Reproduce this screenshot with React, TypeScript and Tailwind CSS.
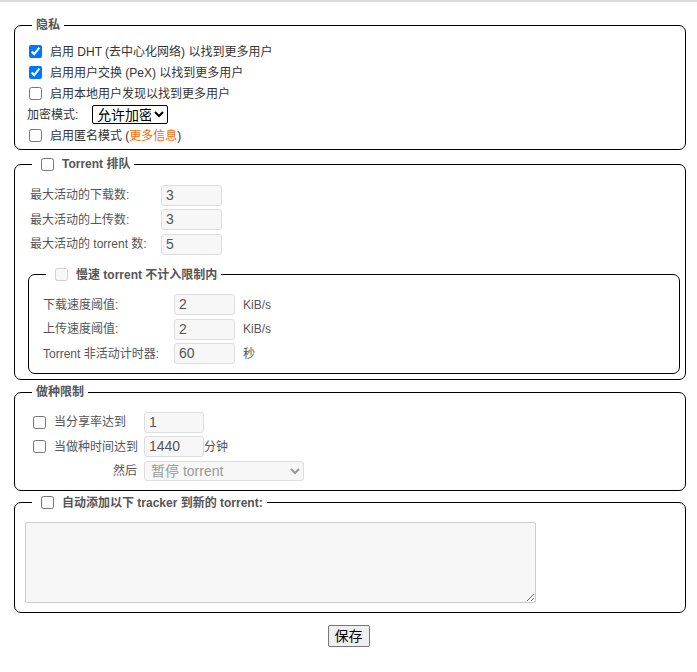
import type { ReactNode } from "react"

function Box({
  legend,
  className = "",
  children,
}: {
  legend: ReactNode
  className?: string
  children: ReactNode
}) {
  return (
    <fieldset className={`border border-black rounded-[7px] ${className}`}>
      <legend className="ml-[17px] px-1 h-[16px] flex items-center gap-2 text-[12px] font-bold text-[#555]">
        {legend}
      </legend>
      {children}
    </fieldset>
  )
}

function NumInput({ value, width = "w-[61px]" }: { value: string; width?: string }) {
  return (
    <input
      type="text"
      defaultValue={value}
      className={`${width} h-[21px] px-[4px] text-[14px] text-[#555] bg-[#f7f7f7] border border-[#ddd] rounded-[3px]`}
    />
  )
}

function Row({ label, value, unit, labelW }: { label: string; value: string; unit?: string; labelW: string }) {
  return (
    <div className="flex items-center h-[24.5px]">
      <span className={labelW}>{label}</span>
      <NumInput value={value} />
      {unit && <span className="ml-2">{unit}</span>}
    </div>
  )
}

export default function App() {
  return (
    <div className="min-h-screen bg-white font-['Liberation_Sans','Noto_Sans_CJK_SC',sans-serif] text-[12px]">
      <div className="h-[2px] bg-[#ddd]" />

      <Box legend="隐私" className="mt-[15px] ml-[14px] mr-[11px]">
        <div className="pl-[14px] pt-[8px] pb-[3px] text-[#333]">
          <label className="flex items-center gap-2 h-[21px]">
            <input type="checkbox" defaultChecked />
            启用 DHT (去中心化网络) 以找到更多用户
          </label>
          <label className="flex items-center gap-2 h-[21px]">
            <input type="checkbox" defaultChecked />
            启用用户交换 (PeX) 以找到更多用户
          </label>
          <label className="flex items-center gap-2 h-[21px]">
            <input type="checkbox" />
            启用本地用户发现以找到更多用户
          </label>
          <div className="flex items-center h-[21px] -ml-[2px]">
            <span className="w-[65px]">加密模式:</span>
            <select className="h-[19px] w-[76px] text-[14px] text-black bg-white border border-black rounded-[2px]">
              <option>允许加密</option>
              <option>强制加密</option>
              <option>禁用加密</option>
            </select>
          </div>
          <label className="flex items-center gap-2 h-[21px]">
            <input type="checkbox" />
            <span>
              启用匿名模式 (<span className="text-[#f60]">更多信息</span>)
            </span>
          </label>
        </div>
      </Box>

      <Box
        legend={
          <>
            <input type="checkbox" className="ml-[5px]" />
            <span>Torrent 排队</span>
          </>
        }
        className="mt-[6px] ml-[14px] mr-[11px]"
      >
        <div className="pt-[11px] pb-[5px] text-[#555]">
          <div className="pl-[15px]">
            <Row label="最大活动的下载数:" value="3" labelW="w-[131px]" />
            <Row label="最大活动的上传数:" value="3" labelW="w-[131px]" />
            <Row label="最大活动的 torrent 数:" value="5" labelW="w-[131px]" />
          </div>
          <Box
            legend={
              <>
                <input type="checkbox" disabled className="ml-[5px]" />
                <span>慢速 torrent 不计入限制内</span>
              </>
            }
            className="mt-[10px] ml-[13px] mr-[5px]"
          >
            <div className="pl-[14px] pt-[10px] pb-[7px]">
              <Row label="下载速度阈值:" value="2" unit="KiB/s" labelW="w-[131px]" />
              <Row label="上传速度阈值:" value="2" unit="KiB/s" labelW="w-[131px]" />
              <Row label="Torrent 非活动计时器:" value="60" unit="秒" labelW="w-[131px]" />
            </div>
          </Box>
        </div>
      </Box>

      <Box legend="做种限制" className="mt-[4px] ml-[14px] mr-[11px]">
        <div className="pl-[18px] pt-[10px] pb-[6px] text-[#555] grid grid-cols-[111px_auto] auto-rows-[24.5px] items-center justify-start">
          <label className="flex items-center gap-[8px]">
            <input type="checkbox" />
            当分享率达到
          </label>
          <NumInput value="1" width="w-[60px]" />
          <label className="flex items-center gap-[8px]">
            <input type="checkbox" />
            当做种时间达到
          </label>
          <div className="flex items-center">
            <NumInput value="1440" width="w-[60px]" />
            <span>分钟</span>
          </div>
          <span className="text-right pr-[7px]">然后</span>
          <select
            disabled
            className="w-[160px] h-[20px] text-[14px] text-[#999] bg-[#f7f7f7] border border-[#ddd] rounded-[3px] pl-[2px]"
          >
            <option>暂停 torrent</option>
            <option>删除 torrent</option>
          </select>
        </div>
      </Box>

      <Box
        legend={
          <>
            <input type="checkbox" className="ml-[5px]" />
            <span>自动添加以下 tracker 到新的 torrent:</span>
          </>
        }
        className="mt-[4px] ml-[14px] mr-[11px]"
      >
        <div className="pl-[10px] pt-[11px] pb-[9px]">
          <textarea className="block w-[511px] h-[81px] bg-[#f7f7f7] border border-[#ccc] rounded-[2px]" />
        </div>
      </Box>

      <div className="flex justify-center mt-[12px]">
        <button className="h-[22px] px-[6px] text-[14px] text-black bg-[#efefef] border border-[#767676] rounded-[2px]">
          保存
        </button>
      </div>
    </div>
  )
}
